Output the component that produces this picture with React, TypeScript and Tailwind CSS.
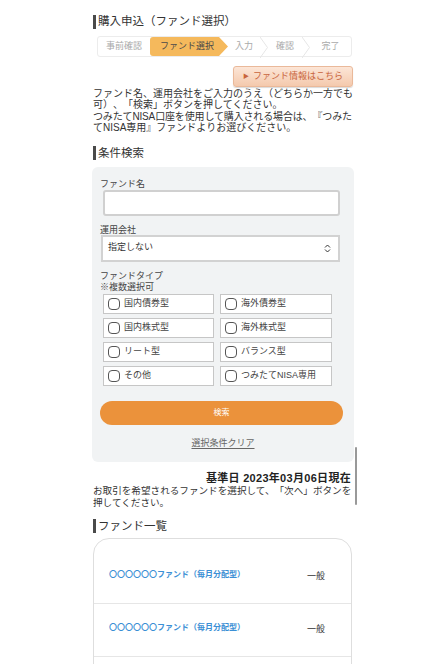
import React from "react";

const Header = ({ title, className = "" }: { title: string; className?: string }) => (
  <div className={`flex items-center h-[15px] ${className}`}>
    <div className="ml-[1px] w-[3px] h-[14px] bg-[#4a4a4a]" />
    <div className="ml-[2px] text-[11.5px] leading-[15px] text-[#333] whitespace-nowrap">{title}</div>
  </div>
);

const Chevron = () => (
  <svg width="8" height="21" viewBox="0 0 8 21" className="shrink-0">
    <polyline points="0,0 7.5,10.5 0,21" fill="none" stroke="#e6e6e6" strokeWidth="1" />
  </svg>
);

const types = [
  "国内債券型",
  "海外債券型",
  "国内株式型",
  "海外株式型",
  "リート型",
  "バランス型",
  "その他",
  "つみたてNISA専用",
];

export default function App() {
  return (
    <div className="relative w-[446px] min-h-[664px] bg-white text-[#333] font-['Liberation_Sans','Noto_Sans_CJK_JP',sans-serif] [text-spacing-trim:space-all] overflow-hidden">
      <div className="mx-auto w-[262px] flex flex-col">
        <Header title="購入申込（ファンド選択）" className="mt-[14px]" />

        {/* stepper */}
        <div className="mt-[7px] ml-[5px] w-[255px] h-[21px] flex border border-[#ececec] rounded-[3px] bg-white text-[9px] leading-[19px]">
          <div className="w-[52px] text-center text-[#aaa] whitespace-nowrap">事前確認</div>
          <div className="w-[78px] bg-[#f5b95c] rounded-l-[3px] text-[#4a4a4a] text-center pr-[4px] whitespace-nowrap [clip-path:polygon(0_0,calc(100%-9px)_0,100%_50%,calc(100%-9px)_100%,0_100%)]">
            ファンド選択
          </div>
          <div className="w-[40px] flex text-[#aaa]">
            <span className="flex-1 text-center whitespace-nowrap">入力</span>
            <Chevron />
          </div>
          <div className="w-[42px] flex text-[#aaa]">
            <span className="flex-1 text-center whitespace-nowrap">確認</span>
            <Chevron />
          </div>
          <div className="flex-1 text-center text-[#aaa] whitespace-nowrap">完了</div>
        </div>

        {/* fund info button */}
        <div className="mt-[9px] self-end mr-[1px] w-[120px] h-[21px] rounded-[3px] border border-[#eab99a] bg-gradient-to-b from-[#fce6d7] to-[#f4c9ad] shadow-[0_1px_1px_rgba(0,0,0,0.15)] flex items-center justify-center text-[9px] text-[#c8643c] whitespace-nowrap">
          <span className="text-[6px] mr-[4px]">▶</span>ファンド情報はこちら
        </div>

        {/* paragraph */}
        <div className="mt-[1px] ml-[1px] text-[10px] leading-[11.4px] text-[#333]">
          <div className="whitespace-nowrap">ファンド名、運用会社をご入力のうえ（どちらか一方でも</div>
          <div className="whitespace-nowrap">可）、「検索」ボタンを押してください。</div>
          <div className="whitespace-nowrap tracking-[-0.15px]">つみたてNISA口座を使用して購入される場合は、『つみた</div>
          <div className="whitespace-nowrap">てNISA専用』ファンドよりお選びください。</div>
        </div>

        <Header title="条件検索" className="mt-[12px]" />

        {/* search panel */}
        <div className="mt-[6px] bg-[#f1f3f4] rounded-[6px] pt-[12px] pb-[13px] flex flex-col">
          <div className="ml-[8px] text-[9px] leading-[11px] text-[#444]">ファンド名</div>
          <div className="ml-[11px] w-[237px] h-[26px] bg-white border-2 border-[#d0d0d0] rounded-[3px]" />

          <div className="mt-[9px] ml-[8px] text-[9px] leading-[10px] text-[#444]">運用会社</div>
          <div className="ml-[9px] w-[239px] h-[27px] bg-white border-2 border-[#d2d2d2] flex items-center pl-[5px] pr-[7px]">
            <span className="flex-1 text-[9px] text-[#333]">指定しない</span>
            <svg width="7" height="9" viewBox="0 0 7 9">
              <polyline points="1,3.5 3.5,1 6,3.5" fill="none" stroke="#333" strokeWidth="1" />
              <polyline points="1,5.5 3.5,8 6,5.5" fill="none" stroke="#333" strokeWidth="1" />
            </svg>
          </div>

          <div className="mt-[9px] ml-[8px] text-[9px] leading-[11px] text-[#444]">ファンドタイプ</div>
          <div className="ml-[8px] text-[9px] leading-[11px] text-[#444]">※複数選択可</div>

          <div className="mt-[1px] ml-[11px] grid grid-cols-[111px_112px] gap-x-[6px] gap-y-[4px]">
            {types.map((t) => (
              <div key={t} className="h-[20px] bg-white border border-[#c6c6c6] flex items-center pl-[4px]">
                <span className="w-[12px] h-[12px] rounded-[4px] border border-[#555] bg-white shrink-0" />
                <span className="ml-[4px] text-[9px] text-[#444] whitespace-nowrap">{t}</span>
              </div>
            ))}
          </div>

          <div className="mt-[15px] ml-[8px] w-[243px] h-[24px] rounded-full bg-[#eb923b] flex items-center justify-center text-[8px] text-white">
            検索
          </div>

          <div className="mt-[13px] self-center text-[9px] leading-[11px] text-[#666] underline underline-offset-2">
            選択条件クリア
          </div>
        </div>

        {/* base date */}
        <div className="mt-[10px] pr-[3px] text-right text-[11px] leading-[13px] font-bold text-[#222] whitespace-nowrap tracking-[0.3px]">
          基準日 2023年03月06日現在
        </div>
        <div className="ml-[1px] text-[9.6px] leading-[12px] text-[#333]">
          <div className="whitespace-nowrap">お取引を希望されるファンドを選択して、「次へ」ボタンを</div>
          <div className="whitespace-nowrap">押してください。</div>
        </div>

        <Header title="ファンド一覧" className="mt-[10px]" />

        {/* fund list */}
        <div className="mt-[4px] ml-[1px] w-[259px] border border-[#dedede] rounded-t-[16px] pt-[12px]">
          {[0, 1].map((i) => (
            <div key={i} className="h-[53px] flex items-center border-b border-[#e6e6e6] pl-[15px] pr-[26px]">
              <span className="flex-1 text-[8px] font-bold text-[#3b8fd5] whitespace-nowrap -mt-[3px]">
                〇〇〇〇〇〇ファンド（毎月分配型）
              </span>
              <span className="text-[9px] text-[#333]">一般</span>
            </div>
          ))}
          <div className="h-[20px]" />
        </div>
      </div>

      {/* scroll indicator */}
      <div className="absolute left-[355px] top-[447px] w-[2px] h-[58px] bg-[#999] rounded-full" />
    </div>
  );
}
